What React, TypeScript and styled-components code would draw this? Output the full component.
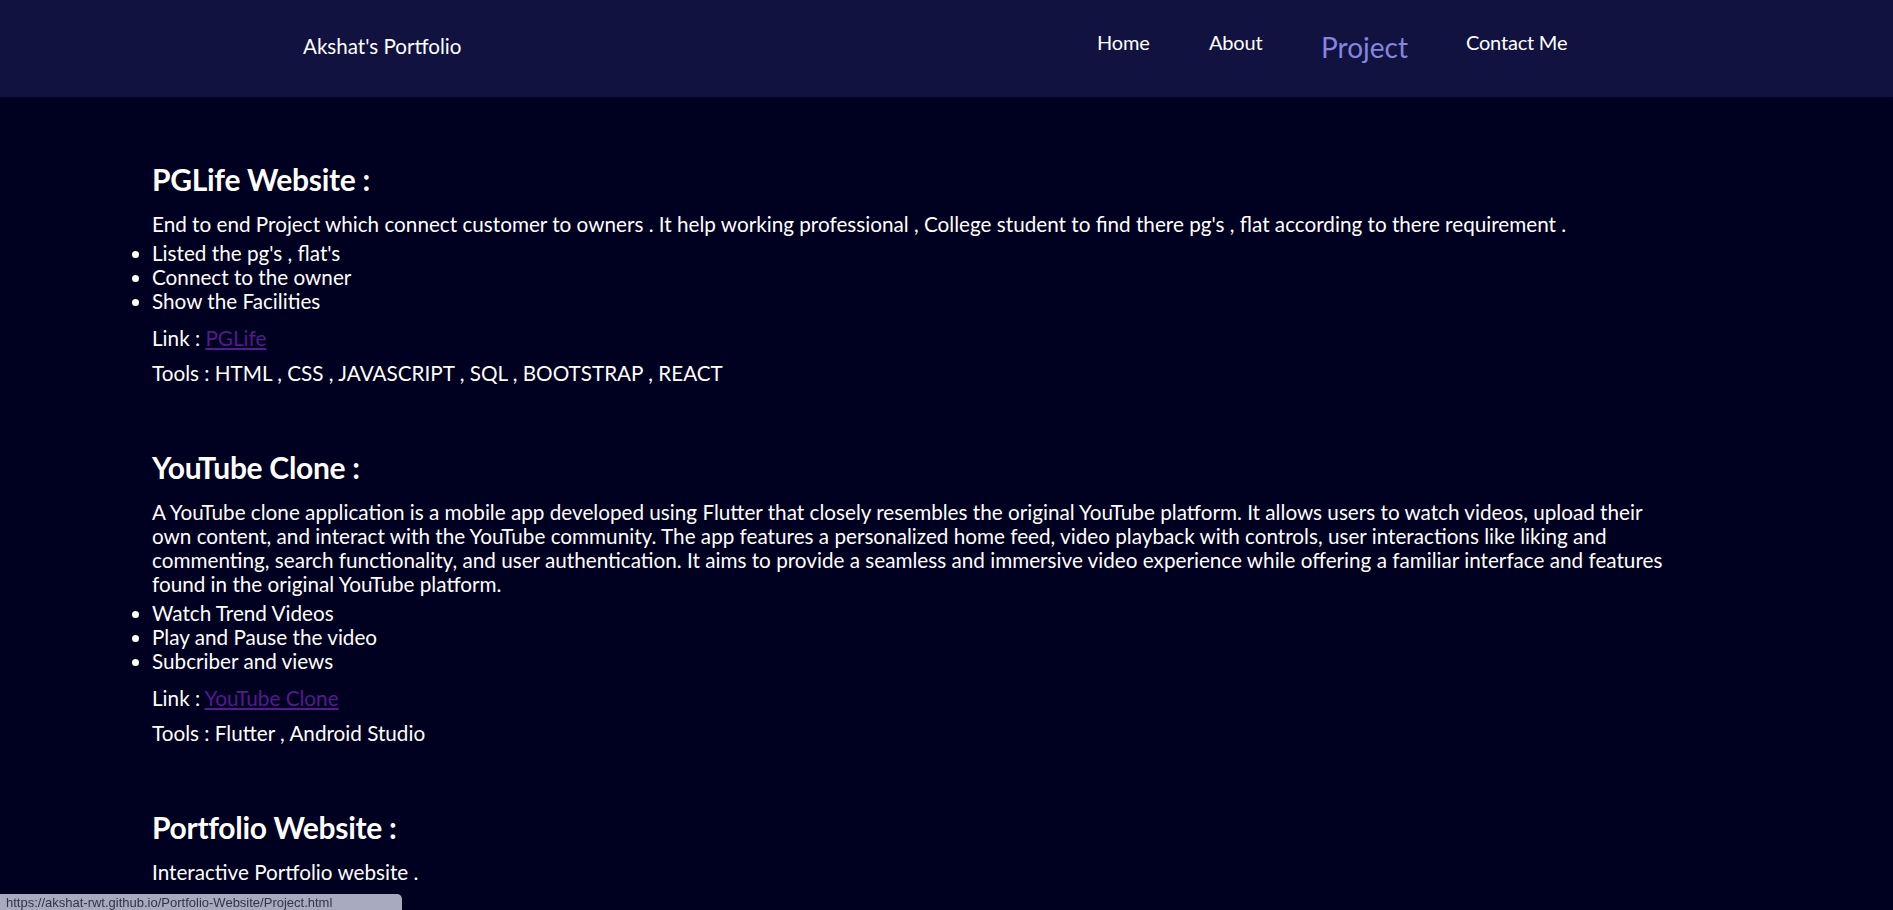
import React from "react";
import styled, { createGlobalStyle } from "styled-components";

const GlobalStyle = createGlobalStyle`
  html, body {
    margin: 0;
    padding: 0;
    background: #000020;
  }
  body {
    font-family: Lato, "Open Sans", sans-serif;
    color: #ffffff;
    overflow: hidden;
  }
  * { box-sizing: border-box; }
`;

const Header = styled.header`
  height: 97px;
  background: #111240;
  display: flex;
  align-items: flex-start;
  padding: 30px 327px 0 303px;
`;

const Logo = styled.div`
  margin-top: 4px;
  font-size: 20.6px;
  line-height: 24px;
  color: #ffffff;
`;

const Nav = styled.nav`
  margin-left: auto;
  display: grid;
  grid-template-columns: 112px 112px 145px 100px;
  align-items: start;
`;

const NavLink = styled.a<{ $active?: boolean }>`
  font-size: ${(p) => (p.$active ? "28px" : "20px")};
  line-height: ${(p) => (p.$active ? "34px" : "24px")};
  letter-spacing: ${(p) => (p.$active ? "0" : "-0.2px")};
  color: ${(p) => (p.$active ? "#8585dd" : "#ffffff")};
  text-decoration: none;
  white-space: nowrap;
  cursor: pointer;
`;

const Main = styled.main`
  padding: 64px 215px 0 152px;
`;

const Section = styled.section`
  margin-bottom: 64px;
`;

const Title = styled.h2`
  margin: 0 0 15px;
  font-size: 30px;
  line-height: 36px;
  font-weight: 700;
  letter-spacing: -0.3px;
`;

const Desc = styled.p`
  margin: 0 0 5px;
  font-size: 20.7px;
  line-height: 24px;
`;

const List = styled.ul`
  margin: 0 0 13px;
  padding: 0;
  list-style: disc outside;
  font-size: 20.7px;
  line-height: 24px;
`;

const Line = styled.p<{ $gap?: number }>`
  margin: 0 0 ${(p) => p.$gap ?? 0}px;
  font-size: 20.7px;
  line-height: 24px;
`;

const ProjectLink = styled.a`
  color: #551a8b;
  text-decoration: underline;
`;

const StatusBubble = styled.div`
  position: fixed;
  left: 0;
  bottom: 0;
  width: 402px;
  height: 16px;
  background: #a8abc0;
  border-top-right-radius: 5px;
  color: #33334a;
  font-family: "Liberation Sans", Arial, sans-serif;
  font-size: 13px;
  line-height: 18px;
  padding: 0 0 0 6px;
  overflow: hidden;
  white-space: nowrap;
`;

type Project = {
  title: string;
  desc: string;
  points?: string[];
  link?: string;
  tools?: string;
};

const projects: Project[] = [
  {
    title: "PGLife Website :",
    desc: "End to end Project which connect customer to owners . It help working professional , College student to find there pg's , flat according to there requirement .",
    points: ["Listed the pg's , flat's", "Connect to the owner", "Show the Facilities"],
    link: "PGLife",
    tools: "HTML , CSS , JAVASCRIPT , SQL , BOOTSTRAP , REACT",
  },
  {
    title: "YouTube Clone :",
    desc: "A YouTube clone application is a mobile app developed using Flutter that closely resembles the original YouTube platform. It allows users to watch videos, upload their own content, and interact with the YouTube community. The app features a personalized home feed, video playback with controls, user interactions like liking and commenting, search functionality, and user authentication. It aims to provide a seamless and immersive video experience while offering a familiar interface and features found in the original YouTube platform.",
    points: ["Watch Trend Videos", "Play and Pause the video", "Subcriber and views"],
    link: "YouTube Clone",
    tools: "Flutter , Android Studio",
  },
  {
    title: "Portfolio Website :",
    desc: "Interactive Portfolio website .",
  },
];

export default function App() {
  return (
    <>
      <GlobalStyle />
      <Header>
        <Logo>Akshat's Portfolio</Logo>
        <Nav>
          <NavLink>Home</NavLink>
          <NavLink>About</NavLink>
          <NavLink $active>Project</NavLink>
          <NavLink>Contact Me</NavLink>
        </Nav>
      </Header>
      <Main>
        {projects.map((p) => (
          <Section key={p.title}>
            <Title>{p.title}</Title>
            <Desc>{p.desc}</Desc>
            {p.points && (
              <List>
                {p.points.map((pt) => (
                  <li key={pt}>{pt}</li>
                ))}
              </List>
            )}
            {p.link && (
              <Line $gap={11}>
                Link : <ProjectLink href="#">{p.link}</ProjectLink>
              </Line>
            )}
            {p.tools && <Line>Tools : {p.tools}</Line>}
          </Section>
        ))}
      </Main>
      <StatusBubble>https://akshat-rwt.github.io/Portfolio-Website/Project.html</StatusBubble>
    </>
  );
}
